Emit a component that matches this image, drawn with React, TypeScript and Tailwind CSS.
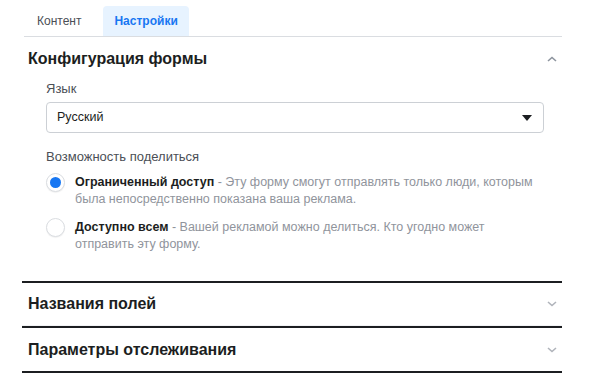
import React from "react";

const font = { fontFamily: "'Liberation Sans', Arial, sans-serif" };

function ChevronUp() {
  return (
    <svg width="10" height="6" viewBox="0 0 10 6" className="text-[#8d949e]">
      <path d="M1 5 L5 1.5 L9 5" fill="none" stroke="currentColor" strokeWidth="1.6" />
    </svg>
  );
}
function ChevronDown() {
  return (
    <svg width="10" height="6" viewBox="0 0 10 6" className="text-[#b0b4bb]">
      <path d="M1 1 L5 4.5 L9 1" fill="none" stroke="currentColor" strokeWidth="1.6" />
    </svg>
  );
}

export default function App() {
  return (
    <div className="w-[589px] h-[382px] bg-white text-[#1c1e21]" style={font}>
      <div className="ml-[24px] w-[538px]">
        {/* tabs */}
        <div className="flex items-end pt-[6px] border-b border-[#dadde1]">
          <div className="h-[30px] px-[13px] flex items-center text-[12px] text-[#4b4f56]">Контент</div>
          <div className="h-[30px] ml-[9px] px-[11px] flex items-center text-[12px] font-bold text-[#1877f2] bg-[#e7f3ff] rounded-t-[4px]">
            Настройки
          </div>
        </div>
      </div>
      <div className="ml-[22px] w-[540px]">
        {/* section 1 */}
        <div className="pl-[6px] pr-[5px] pb-[20px]">
          <div className="h-[44px] flex items-center justify-between">
            <div className="text-[16px] font-bold text-[#1c1e21]">Конфигурация формы</div>
            <ChevronUp />
          </div>
          <div className="pl-[18px] pr-[13px]">
            <div className="text-[13px] text-[#4b4f56] leading-[16px]">Язык</div>
            <div className="mt-[5px] h-[31px] border border-[#ccd0d5] rounded-[4px] flex items-center justify-between pl-[10px] pr-[11px]">
              <span className="text-[12.5px] text-[#1c1e21]">Русский</span>
              <svg width="10" height="6" viewBox="0 0 10 6">
                <path d="M0 0 H10 L5 6 Z" fill="#1c1e21" />
              </svg>
            </div>
            <div className="mt-[16px] text-[13px] text-[#4b4f56] leading-[16px]">Возможность поделиться</div>
            <div className="mt-[9px] flex flex-col gap-[11px]">
              <div className="flex items-start">
                <div className="mt-[-1px] w-[19px] h-[19px] rounded-full border border-[#dadde1] flex items-center justify-center shrink-0 bg-white shadow-[0_1px_1px_rgba(0,0,0,0.06)]">
                  <div className="w-[11px] h-[11px] rounded-full bg-[#1877f2]" />
                </div>
                <div className="ml-[10px] text-[12.5px] leading-[17px] text-[#90949c] pr-[4px]">
                  <span className="font-bold text-[#1c1e21]">Ограниченный доступ</span> - Эту форму смогут отправлять только люди, которым была непосредственно показана ваша реклама.
                </div>
              </div>
              <div className="flex items-start">
                <div className="mt-[-1px] w-[19px] h-[19px] rounded-full border border-[#dadde1] shrink-0 bg-white shadow-[0_1px_1px_rgba(0,0,0,0.06)]" />
                <div className="ml-[10px] text-[12.5px] leading-[17px] text-[#90949c] pr-[40px]">
                  <span className="font-bold text-[#1c1e21]">Доступно всем</span> - Вашей рекламой можно делиться. Кто угодно может отправить эту форму.
                </div>
              </div>
            </div>
          </div>
        </div>
        <div className="border-t-2 border-[#1c1e21] mt-[8px]" />
        <div className="h-[43px] flex items-center justify-between pl-[6px] pr-[5px] border-b border-[#f2f3f5]">
          <div className="text-[16px] font-bold">Названия полей</div>
          <ChevronDown />
        </div>
        <div className="border-t-2 border-[#1c1e21]" />
        <div className="h-[43px] flex items-center justify-between pl-[6px] pr-[5px]">
          <div className="text-[16px] font-bold">Параметры отслеживания</div>
          <ChevronDown />
        </div>
        <div className="border-t-2 border-[#1c1e21]" />
      </div>
    </div>
  );
}
